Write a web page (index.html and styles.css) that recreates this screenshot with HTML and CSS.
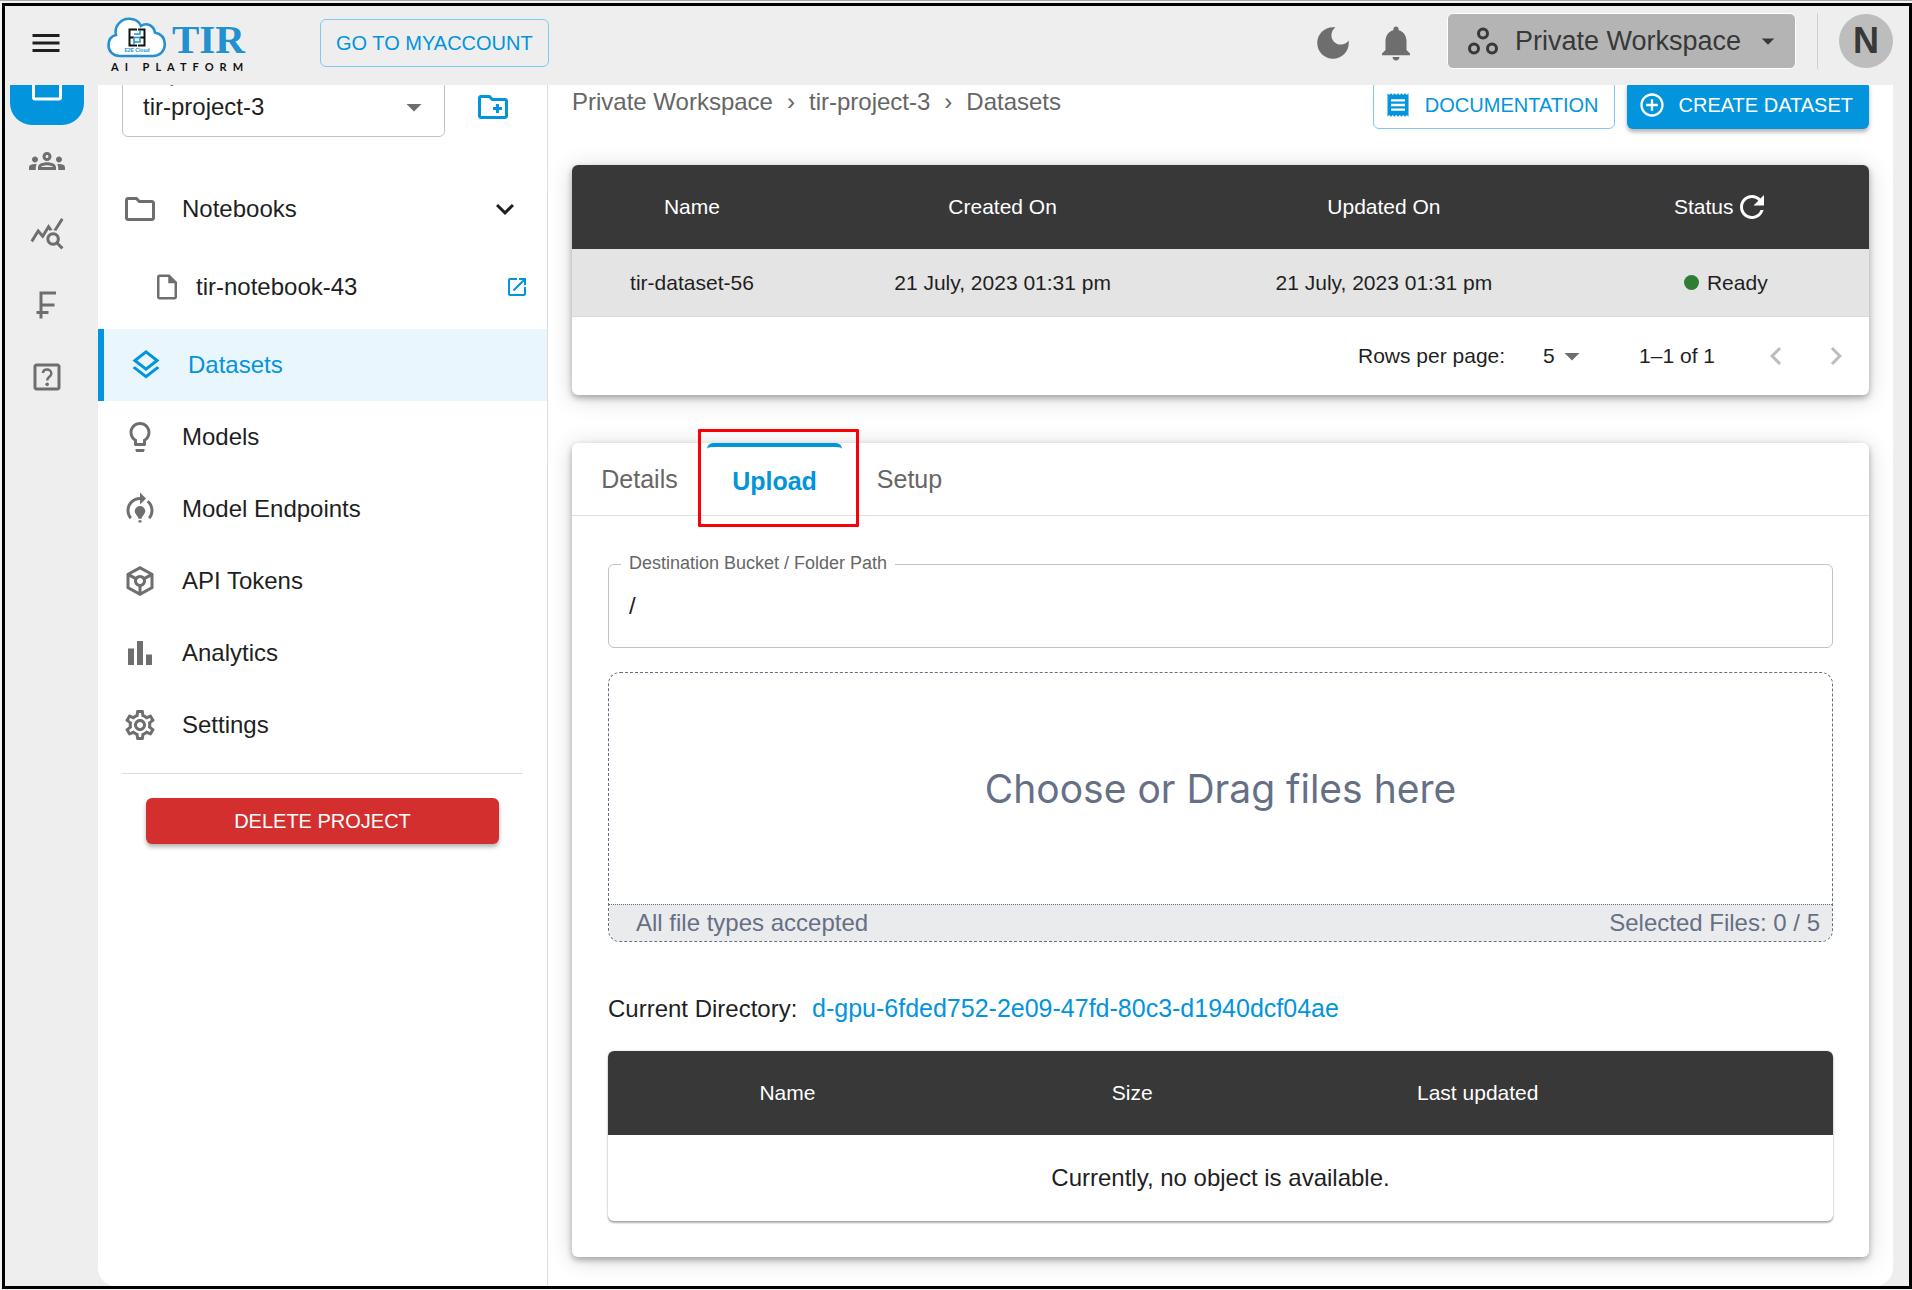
FILE: index.html
```html
<!DOCTYPE html>
<html lang="en">
<head>
  <meta charset="utf-8">
  <meta name="viewport" content="width=device-width, initial-scale=1">
  <title>Datasets - TIR AI Platform</title>
  <link rel="stylesheet" href="styles.css">
</head>
<body>
  <svg class="sprite" aria-hidden="true">
    <symbol id="i-caret" viewBox="0 0 24 24"><path d="M7 10l5 5 5-5z"/></symbol>
    <symbol id="i-refresh" viewBox="0 0 24 24"><path d="M17.65 6.35C16.2 4.9 14.21 4 12 4c-4.42 0-7.99 3.58-7.99 8s3.57 8 7.99 8c3.73 0 6.84-2.55 7.73-6h-2.08c-.82 2.33-3.04 4-5.65 4-3.31 0-6-2.69-6-6s2.69-6 6-6c1.66 0 3.14.69 4.22 1.78L13 11h7V4l-2.35 2.35z"/></symbol>
  </svg>

  <div class="frame">
    <header class="topbar">
      <button class="icon-btn" type="button" aria-label="Menu">
        <svg class="icon" viewBox="0 0 24 24"><path d="M3 18h18v-2H3v2zm0-5h18v-2H3v2zm0-7v2h18V6H3z"/></svg>
      </button>
      <a class="logo" href="#" aria-label="TIR AI Platform">
        <svg class="logo-mark" viewBox="0 -2 142 60">
          <path d="M13 41C6 41 1.500 36 1.500 30.500c0-6 3-9.500 7.500-10.500C7 11 14 3.800 22 3.800c6 0 10 2.700 12 7.200 5-3.500 12.500-1.500 14 6.500 6.500 1.500 9.800 6 9.800 11.500 0 7-5 12-12 12z" fill="#fff" stroke="#2391d0" stroke-width="2.600"/>
          <g fill="none" stroke-width="2">
            <path d="M30 14.500H22.500v16H30M22.500 22.500H27" stroke="#111"/>
            <path d="M31 14.500h6.500v16H31M33 22.500h4.500" stroke="#111"/>
            <path d="M27 19h6v-4M27 30v-7.500h6V27h-6" stroke="#2391d0" stroke-width="1.500"/>
          </g>
          <text class="logo-cloud" x="30" y="37" text-anchor="middle">E2E Cloud</text>
          <text class="logo-name" x="65" y="38">TIR</text>
          <text class="logo-tag" x="4" y="56">AI PLATFORM</text>
        </svg>
      </a>
      <a class="btn btn-outline account" href="#">GO TO MYACCOUNT</a>
      <div class="topbar-tools">
        <button class="icon-btn muted" type="button" aria-label="Dark mode">
          <svg class="icon-lg" viewBox="0 0 24 24"><path d="M12 3c-4.970 0-9 4.030-9 9s4.030 9 9 9 9-4.030 9-9c0-.46-.04-.92-.1-1.360-.98 1.370-2.580 2.260-4.400 2.260-2.980 0-5.400-2.420-5.400-5.400 0-1.810.89-3.420 2.260-4.400-.44-.06-.9-.1-1.360-.1z"/></svg>
        </button>
        <button class="icon-btn muted" type="button" aria-label="Notifications">
          <svg class="icon-lg" viewBox="0 0 24 24"><path d="M12 22c1.100 0 2-.9 2-2h-4c0 1.100.89 2 2 2zm6-6v-5c0-3.070-1.640-5.640-4.500-6.320V4c0-.83-.67-1.500-1.500-1.500s-1.500.67-1.500 1.500v.68C7.630 5.360 6 7.920 6 11v5l-2 2v1h16v-1l-2-2z"/></svg>
        </button>
        <div class="account-tools">
          <button class="workspace" type="button">
            <svg class="icon outline" viewBox="0 0 24 24"><circle cx="12" cy="7" r="3"/><circle cx="6" cy="17" r="3"/><circle cx="18" cy="17" r="3"/></svg>
            <span>Private Workspace</span>
            <svg class="icon-md" viewBox="0 0 24 24"><use href="#i-caret"/></svg>
          </button>
          <span class="divider-v"></span>
          <button class="avatar" type="button" aria-label="Account">N</button>
        </div>
      </div>
    </header>

    <div class="body">
      <nav class="rail" aria-label="Main">
        <a class="rail-item active" href="#" aria-label="Projects"><svg class="icon outline" viewBox="0 0 24 24"><rect x="3" y="3" width="18" height="19" rx="1"/></svg></a>
        <a class="rail-item" href="#" aria-label="Teams"><svg class="icon" viewBox="0 0 24 24"><path d="M4 13c1.100 0 2-.9 2-2s-.9-2-2-2-2 .9-2 2 .9 2 2 2zm1.130 1.100c-.37-.06-.74-.1-1.130-.1-.99 0-1.930.21-2.780.58C.48 14.900 0 15.620 0 16.430V18h4.500v-1.610c0-.83.23-1.610.63-2.290zM20 13c1.100 0 2-.9 2-2s-.9-2-2-2-2 .9-2 2 .9 2 2 2zm4 3.430c0-.81-.48-1.530-1.220-1.850-.85-.37-1.790-.58-2.780-.58-.39 0-.76.04-1.130.1.4.68.63 1.460.63 2.290V18H24v-1.570zm-7.760-2.780c-1.170-.52-2.610-.9-4.240-.9s-3.070.39-4.240.9C6.680 14.130 6 15.210 6 16.390V18h12v-1.610c0-1.180-.68-2.260-1.760-2.740zM8.070 16c.09-.23.13-.39.91-.69.97-.38 1.990-.56 3.020-.56s2.050.18 3.020.56c.77.3.81.46.91.69H8.070zM12 8c.55 0 1 .45 1 1s-.45 1-1 1-1-.45-1-1 .45-1 1-1m0-2c-1.660 0-3 1.340-3 3s1.340 3 3 3 3-1.340 3-3-1.340-3-3-3z"/></svg></a>
        <a class="rail-item" href="#" aria-label="Usage"><svg class="icon" viewBox="0 0 24 24"><path d="M19.880 18.470c.44-.7.7-1.510.7-2.390 0-2.490-2.010-4.500-4.500-4.500s-4.500 2.010-4.500 4.500 2.010 4.500 4.490 4.500c.88 0 1.700-.26 2.390-.7L21.580 23 23 21.580l-3.120-3.110zm-3.800.11c-1.380 0-2.500-1.120-2.500-2.500s1.120-2.500 2.500-2.500 2.500 1.120 2.500 2.500-1.120 2.500-2.500 2.500zm-.36-8.500c-.74.02-1.450.18-2.100.45l-.55-.83-3.800 6.180-3.010-3.520-3.630 5.810L1 17l5-8 3 3.500L13 6l2.720 4.080zm2.590.5c-.64-.28-1.330-.45-2.050-.49L21.380 2 23 3.180l-4.690 7.400z"/></svg></a>
        <a class="rail-item" href="#" aria-label="Billing"><svg class="icon" viewBox="0 0 24 24"><path d="M18 5V3H7v13H5v2h2v3h2v-3h4v-2H9v-3h8v-2H9V5z"/></svg></a>
        <a class="rail-item" href="#" aria-label="Help"><svg class="icon" viewBox="0 0 24 24"><path d="M19 3H5c-1.100 0-2 .9-2 2v14c0 1.100.9 2 2 2h14c1.100 0 2-.9 2-2V5c0-1.100-.9-2-2-2zm0 16H5V5h14v14z"/><path d="M9.200 9.300C9.500 7.800 10.600 7 12 7c1.700 0 2.900 1.100 2.900 2.600 0 2.200-2.800 2.300-2.800 4.700" fill="none" stroke="currentColor" stroke-width="1.600"/><circle cx="12.100" cy="16.900" r="1.200"/></svg></a>
      </nav>

      <main class="main">
        <aside class="sidebar">
          <div class="project">
            <div class="field project-field">
              <label class="field-label" for="project">Project</label>
              <select id="project" class="project-select"><option>tir-project-3</option></select>
              <svg class="icon project-caret" viewBox="0 0 24 24" aria-hidden="true"><use href="#i-caret"/></svg>
            </div>
            <button class="icon-btn primary" type="button" aria-label="New project">
              <svg class="icon" viewBox="0 0 24 24"><path d="M20 6h-8l-2-2H4c-1.110 0-1.990.89-1.990 2L2 18c0 1.110.89 2 2 2h16c1.110 0 2-.89 2-2V8c0-1.110-.89-2-2-2zm0 12H4V6h5.170l2 2H20v10zm-8-4h2v2h2v-2h2v-2h-2v-2h-2v2h-2z"/></svg>
            </button>
          </div>

          <nav class="menu" aria-label="Project">
            <a class="menu-item" href="#">
              <svg class="icon" viewBox="0 0 24 24"><path d="M9.170 6l2 2H20v10H4V6h5.170M10 4H4c-1.100 0-1.990.9-1.990 2L2 18c0 1.100.9 2 2 2h16c1.100 0 2-.9 2-2V8c0-1.100-.9-2-2-2h-8l-2-2z"/></svg>
              <span class="menu-text">Notebooks</span>
              <svg class="icon dark" viewBox="0 0 24 24"><path d="M16.590 8.590L12 13.170 7.410 8.590 6 10l6 6 6-6z"/></svg>
            </a>
            <a class="menu-item sub" href="#">
              <svg class="icon-md" viewBox="0 0 24 24"><path d="M14 2H6c-1.100 0-1.990.9-1.990 2L4 20c0 1.100.89 2 1.990 2H18c1.100 0 2-.9 2-2V8l-6-6zM6 20V4h7v5h5v11H6z"/></svg>
              <span class="menu-text">tir-notebook-43</span>
              <svg class="icon-sm primary" viewBox="0 0 24 24"><path d="M19 19H5V5h7V3H5c-1.110 0-2 .9-2 2v14c0 1.100.89 2 2 2h14c1.100 0 2-.9 2-2v-7h-2v7zM14 3v2h3.590l-9.830 9.830 1.410 1.410L19 6.410V10h2V3h-7z"/></svg>
            </a>
            <a class="menu-item selected" href="#" aria-current="page">
              <svg class="icon" viewBox="0 0 24 24"><path d="M11.990 18.540l-7.370-5.730L3 14.070l9 7 9-7-1.630-1.270zM12 16l7.360-5.730L21 9l-9-7-9 7 1.630 1.270L12 16zm0-11.470L17.740 9 12 13.470 6.260 9 12 4.530z"/></svg>
              <span class="menu-text">Datasets</span>
            </a>
            <a class="menu-item" href="#">
              <svg class="icon" viewBox="0 0 24 24"><path d="M9 21c0 .55.45 1 1 1h4c.55 0 1-.45 1-1v-1H9v1zm3-19C8.140 2 5 5.140 5 9c0 2.380 1.190 4.470 3 5.740V17c0 .55.45 1 1 1h6c.55 0 1-.45 1-1v-2.260c1.810-1.270 3-3.360 3-5.740 0-3.860-3.140-7-7-7zm2.850 11.100l-.85.6V16h-4v-2.300l-.85-.6C7.800 12.160 7 10.630 7 9c0-2.760 2.240-5 5-5s5 2.240 5 5c0 1.630-.8 3.160-2.150 4.100z"/></svg>
              <span class="menu-text">Models</span>
            </a>
            <a class="menu-item" href="#">
              <svg class="icon" viewBox="0 0 24 24"><path d="M15.500 13.500c0 2-2.500 3.500-2.500 5h-2c0-1.500-2.500-3-2.500-5 0-1.930 1.570-3.500 3.500-3.500s3.500 1.570 3.500 3.500zM13 19.500h-2V21h2v-1.500zM19 13c0 1.680-.59 3.210-1.580 4.420l1.420 1.420C20.180 17.270 21 15.230 21 13c0-2.740-1.230-5.190-3.160-6.840l-1.420 1.420C17.990 8.860 19 10.820 19 13zM16 5l-4-4v3c-4.970 0-9 4.030-9 9 0 2.230.82 4.270 2.160 5.840l1.420-1.420C5.590 16.210 5 14.680 5 13c0-3.860 3.140-7 7-7v3l4-4z"/></svg>
              <span class="menu-text">Model Endpoints</span>
            </a>
            <a class="menu-item" href="#">
              <svg class="icon" viewBox="0 0 24 24"><path d="M21 7 12 2 3 7v10l9 5 9-5V7zm-9-2.710 5.910 3.280-3.010 1.670C14.170 8.480 13.140 8 12 8s-2.170.48-2.900 1.240L6.090 7.570 12 4.290zm-1 14.870-6-3.330V9.260l3.130 1.740c-.08.32-.13.65-.13 1 0 1.860 1.270 3.430 3 3.870v3.290zM10 12c0-1.100.9-2 2-2s2 .9 2 2-.9 2-2 2-2-.9-2-2zm3 7.160v-3.280c1.730-.44 3-2.010 3-3.870 0-.35-.05-.68-.14-1.010L19 9.260v6.570l-6 3.330z"/></svg>
              <span class="menu-text">API Tokens</span>
            </a>
            <a class="menu-item" href="#">
              <svg class="icon" viewBox="0 0 24 24"><path d="M4 9h4v11H4zM16 13h4v7h-4zM10 4h4v16h-4z"/></svg>
              <span class="menu-text">Analytics</span>
            </a>
            <a class="menu-item" href="#">
              <svg class="icon" viewBox="0 0 24 24"><path d="M19.430 12.980c.04-.32.07-.64.07-.98 0-.34-.03-.66-.07-.98l2.110-1.650c.19-.15.24-.42.12-.64l-2-3.460c-.09-.16-.26-.25-.44-.25-.06 0-.12.01-.17.03l-2.490 1c-.52-.4-1.080-.73-1.690-.98l-.38-2.650C14.460 2.180 14.250 2 14 2h-4c-.25 0-.46.18-.49.42l-.38 2.650c-.61.25-1.170.59-1.690.98l-2.490-1c-.06-.02-.12-.03-.18-.03-.17 0-.34.09-.43.25l-2 3.460c-.13.22-.07.49.12.64l2.110 1.650c-.04.32-.07.65-.07.98 0 .33.03.66.07.98l-2.110 1.650c-.19.15-.24.42-.12.64l2 3.460c.09.16.26.25.44.25.06 0 .12-.01.17-.03l2.490-1c.52.4 1.080.73 1.690.98l.38 2.650c.03.24.24.42.49.42h4c.25 0 .46-.18.49-.42l.38-2.650c.61-.25 1.170-.59 1.690-.98l2.490 1c.06.02.12.03.18.03.17 0 .34-.09.43-.25l2-3.460c.12-.22.07-.49-.12-.64l-2.110-1.650zm-1.980-1.710c.04.31.05.52.05.73 0 .21-.02.43-.05.73l-.14 1.130.89.7 1.080.84-.7 1.210-1.270-.51-1.040-.42-.9.68c-.43.32-.84.56-1.250.73l-1.060.43-.16 1.130-.2 1.350h-1.400l-.19-1.350-.16-1.130-1.060-.43c-.43-.18-.83-.41-1.230-.71l-.91-.7-1.060.43-1.270.51-.7-1.210 1.080-.84.89-.7-.14-1.130c-.03-.31-.05-.54-.05-.74s.02-.43.05-.73l.14-1.130-.89-.7-1.080-.84.7-1.210 1.270.51 1.040.42.9-.68c.43-.32.84-.56 1.250-.73l1.060-.43.16-1.130.2-1.350h1.390l.19 1.350.16 1.130 1.060.43c.43.18.83.41 1.230.71l.91.7 1.060-.43 1.270-.51.7 1.210-1.070.85-.89.7.14 1.130zM12 8c-2.210 0-4 1.790-4 4s1.790 4 4 4 4-1.790 4-4-1.790-4-4-4zm0 6c-1.100 0-2-.9-2-2s.9-2 2-2 2 .9 2 2-.9 2-2 2z"/></svg>
              <span class="menu-text">Settings</span>
            </a>
          </nav>
          <div class="sidebar-foot">
            <button class="btn btn-danger" type="button">DELETE PROJECT</button>
          </div>
        </aside>

        <section class="content">
          <div class="page-head">
            <nav class="crumbs" aria-label="Breadcrumb">
              <a href="#">Private Workspace</a><span>›</span><a href="#">tir-project-3</a><span>›</span><a href="#">Datasets</a>
            </nav>
            <div class="actions">
              <a class="btn btn-outline" href="#">
                <svg class="icon-btn-glyph" viewBox="0 0 24 24"><path d="M18 17H6v-2h12v2zm0-4H6v-2h12v2zm0-4H6V7h12v2zM3 22l1.500-1.500L6 22l1.500-1.500L9 22l1.500-1.500L12 22l1.500-1.500L15 22l1.500-1.500L18 22l1.500-1.500L21 22V2l-1.500 1.500L18 2l-1.500 1.500L15 2l-1.500 1.500L12 2l-1.500 1.500L9 2 7.500 3.500 6 2 4.500 3.500 3 2v20z"/></svg>
                DOCUMENTATION
              </a>
              <button class="btn btn-primary" type="button">
                <svg class="icon-btn-glyph" viewBox="0 0 24 24"><path d="M13 7h-2v4H7v2h4v4h2v-4h4v-2h-4V7zm-1-5C6.480 2 2 6.480 2 12s4.480 10 10 10 10-4.480 10-10S17.520 2 12 2zm0 18c-4.410 0-8-3.590-8-8s3.590-8 8-8 8 3.590 8 8-3.590 8-8 8z"/></svg>
                CREATE DATASET
              </button>
            </div>
          </div>

          <div class="card">
            <table class="grid datasets">
              <colgroup><col class="d-name"><col class="d-date"><col class="d-date"><col></colgroup>
              <thead>
                <tr>
                  <th scope="col">Name</th>
                  <th scope="col">Created On</th>
                  <th scope="col">Updated On</th>
                  <th scope="col"><span class="status-head">Status<button class="icon-btn" type="button" aria-label="Refresh"><svg class="icon" viewBox="0 0 24 24"><use href="#i-refresh"/></svg></button></span></th>
                </tr>
              </thead>
              <tbody>
                <tr>
                  <td>tir-dataset-56</td>
                  <td>21 July, 2023 01:31 pm</td>
                  <td>21 July, 2023 01:31 pm</td>
                  <td><span class="status"><span class="dot"></span>Ready</span></td>
                </tr>
              </tbody>
            </table>
            <div class="pager">
              <label for="rows">Rows per page:</label>
              <span class="rows-box">
                <select id="rows" class="rows-select"><option>5</option></select>
                <svg class="icon rows-caret" viewBox="0 0 24 24" aria-hidden="true"><use href="#i-caret"/></svg>
              </span>
              <span class="range">1–1 of 1</span>
              <span class="pager-nav">
                <button class="icon-btn off" type="button" aria-label="Previous page"><svg class="icon" viewBox="0 0 24 24"><path d="M15.410 7.410L14 6l-6 6 6 6 1.410-1.410L10.830 12z"/></svg></button>
                <button class="icon-btn off" type="button" aria-label="Next page"><svg class="icon" viewBox="0 0 24 24"><path d="M10 6L8.590 7.410 13.170 12l-4.580 4.590L10 18l6-6z"/></svg></button>
              </span>
            </div>
          </div>

          <div class="card panel">
            <div class="tabs" role="tablist">
              <button class="tab" type="button" role="tab">Details</button>
              <button class="tab current" type="button" role="tab" aria-selected="true">Upload</button>
              <button class="tab" type="button" role="tab">Setup</button>
            </div>
            <div class="panel-body">
              <div class="field">
                <label class="field-label" for="path">Destination Bucket / Folder Path</label>
                <input id="path" class="path-input" type="text" value="/">
              </div>
              <label class="dropzone">
                <input class="file-input" type="file" multiple>
                <span class="drop-title">Choose or Drag files here</span>
                <span class="drop-foot"><span>All file types accepted</span><span>Selected Files: 0 / 5</span></span>
              </label>
              <p class="directory">Current Directory: <a href="#">d-gpu-6fded752-2e09-47fd-80c3-d1940dcf04ae</a></p>
              <table class="grid objects">
                <colgroup><col class="o-name"><col class="o-size"><col class="o-date"><col></colgroup>
                <thead>
                  <tr><th scope="col">Name</th><th scope="col">Size</th><th scope="col">Last updated</th><th></th></tr>
                </thead>
                <tbody>
                  <tr><td colspan="4">Currently, no object is available.</td></tr>
                </tbody>
              </table>
            </div>
          </div>
        </section>
      </main>
    </div>
  </div>
</body>
</html>
```

FILE: styles.css
```css
* { box-sizing: border-box; }

:root {
  --blue: #0294dc;
  --ink: #1f1f1f;
  --grey: #6e6e6e;
  --slate: #667085;
  --surface: #eeeeee;
  --head: #383838;
  --line: #dedede;
}

body {
  margin: 0;
  min-height: 100vh;
  display: flex;
  padding: 2px 0 2px 2px;
  border-top: 1px solid #a9a9ab;
  background: #f4f4f4;
  color: var(--ink);
  font: 24px/36px "Liberation Sans", Arial, sans-serif;
}

a { color: inherit; text-decoration: none; }
button, input, select { font: inherit; color: inherit; }
svg { display: block; flex: none; fill: currentColor; }

.sprite { position: absolute; width: 0; height: 0; }
.icon { width: 36px; height: 36px; }
.icon-lg { width: 42px; height: 42px; }
.icon-md { width: 30px; height: 30px; }
.icon-sm { width: 24px; height: 24px; }
.icon-btn-glyph { width: 28px; height: 28px; }
.outline { fill: none; stroke: currentColor; stroke-width: 2; }

.icon-btn {
  display: flex;
  padding: 0;
  border: 0;
  background: none;
  cursor: pointer;
}
.icon-btn.muted { color: var(--grey); }
.icon-btn.primary { color: var(--blue); }
.icon-btn.off { color: #bdbdbd; }

.frame {
  flex: 1;
  min-width: 0;
  display: flex;
  flex-direction: column;
  border: 3px solid #000;
  background: var(--surface);
}

/* Top bar */
.topbar {
  position: relative;
  z-index: 2;
  display: flex;
  align-items: center;
  height: 79px;
  padding: 0 16px 6px 23px;
  background: var(--surface);
}
.logo { margin: 0 71px 0 43px; }
.logo-mark { width: 142px; height: 60px; }
.logo-cloud { font: bold 5px "Liberation Sans", sans-serif; fill: #2391d0; }
.logo-name { font: bold 41px "Liberation Serif", serif; fill: #2391d0; }
.logo-tag { font: bold 11px Lato, sans-serif; letter-spacing: 6px; fill: #111; }
.topbar-tools {
  display: flex;
  align-items: center;
  gap: 21px;
  margin-left: auto;
}
.account-tools {
  display: flex;
  align-items: center;
  gap: 21px;
  padding: 0 0 4px 9px;
}
.workspace {
  display: flex;
  align-items: center;
  width: 349px;
  height: 56px;
  padding: 0 12px 0 17px;
  border: 1px solid #fff;
  border-radius: 6px;
  background: #b4b4b4;
  color: #383838;
  font-size: 27px;
}
.workspace span { margin: 0 auto 0 14px; }
.divider-v { width: 1px; height: 56px; background: #d0d0d0; }
.avatar {
  width: 54px;
  height: 54px;
  padding: 0;
  border: 0;
  border-radius: 50%;
  background: #bdbdbd;
  color: #383838;
  font-size: 36px;
  font-weight: bold;
}

/* Buttons */
.btn {
  display: flex;
  align-items: center;
  justify-content: center;
  height: 48px;
  border: 1px solid transparent;
  border-radius: 6px;
  font-size: 20px;
  gap: 13px;
  padding: 0 15px 0 10px;
  white-space: nowrap;
}
.btn-outline { border-color: #80c9ed; color: var(--blue); }
.account { padding: 0 15px; }
.btn-primary {
  background: var(--blue);
  color: #fff;
  box-shadow: 0 3px 4px rgba(0, 0, 0, .3);
}
.btn-danger {
  width: 100%;
  height: 46px;
  padding: 0 10px;
  background: #d32f2f;
  color: #fff;
  box-shadow: 0 3px 4px rgba(0, 0, 0, .3);
}

/* The scrolled page runs under the top bar */
.body {
  flex: 1;
  display: flex;
  margin-top: -34px;
}
.rail {
  width: 93px;
  padding-left: 5px;
  flex: none;
}
.rail-item {
  display: flex;
  align-items: center;
  justify-content: center;
  width: 74px;
  height: 72px;
  color: var(--grey);
}
.rail-item.active {
  height: 74px;
  padding-bottom: 8px;
  border-radius: 22px;
  background: var(--blue);
  color: #fff;
}
.main {
  flex: 1;
  min-width: 0;
  display: flex;
  margin-right: 16px;
  border-radius: 0 0 18px 18px;
  background: #fff;
}

/* Sidebar */
.sidebar {
  flex: none;
  width: 450px;
  padding-top: 26px;
  border-right: 1px solid var(--line);
}
.project {
  display: flex;
  align-items: center;
  gap: 30px;
  padding-left: 24px;
}
.field {
  position: relative;
  border: 1px solid #c2c2c2;
  border-radius: 6px;
}
.field-label {
  position: absolute;
  top: -14px;
  left: 12px;
  padding: 0 8px;
  background: #fff;
  color: #666;
  font-size: 18px;
  line-height: 24px;
}
.project-field { width: 323px; }
.project-select {
  display: block;
  width: 100%;
  height: 58px;
  padding: 0 48px 0 20px;
  border: 0;
  border-radius: 6px;
  background: none;
  appearance: none;
}
.project-caret {
  position: absolute;
  top: 11px;
  right: 12px;
  color: var(--grey);
  pointer-events: none;
}
.menu { margin-top: 36px; }
.menu-item {
  display: flex;
  align-items: center;
  gap: 24px;
  height: 72px;
  padding: 0 24px;
}
.menu-item svg { color: var(--grey); }
.menu-item .dark { color: var(--ink); }
.menu-item .primary { color: var(--blue); }
.menu-text { flex: 1; }
.menu-item.sub {
  height: 84px;
  gap: 14px;
  padding: 0 18px 0 54px;
}
.menu-item.selected {
  border-left: 6px solid var(--blue);
  background: #eaf6fd;
}
.menu-item.selected, .menu-item.selected svg { color: var(--blue); }
.sidebar-foot {
  margin: 12px 24px 0;
  padding: 24px;
  border-top: 1px solid var(--line);
}

/* Page content */
.content {
  flex: 1;
  min-width: 0;
  padding: 30px 24px 29px;
}
.page-head {
  display: flex;
  justify-content: space-between;
  height: 48px;
  margin-bottom: 36px;
}
.crumbs {
  display: flex;
  gap: 14px;
  line-height: 42px;
  color: #666;
}
.actions { display: flex; gap: 12px; }

.card {
  border-radius: 6px;
  background: #fff;
  box-shadow: 0 3px 6px rgba(0, 0, 0, .3), 0 3px 24px rgba(0, 0, 0, .16);
}
.grid {
  width: 100%;
  border-collapse: separate;
  border-spacing: 0;
  table-layout: fixed;
  text-align: center;
}
.grid th {
  height: 84px;
  padding: 0;
  background: var(--head);
  color: #fff;
  font-size: 21px;
  font-weight: normal;
}
.grid th:first-child { border-top-left-radius: 6px; }
.grid th:last-child { border-top-right-radius: 6px; }
.grid td { padding: 0; }
.datasets td {
  height: 68px;
  border-bottom: 1px solid #dadada;
  background: #e4e4e4;
  font-size: 21px;
}
.d-name { width: 18.5%; }
.d-date { width: 29.4%; }
.status-head, .status {
  display: flex;
  align-items: center;
  justify-content: center;
}
.status { gap: 8px; padding-left: 8px; }
.dot { width: 15px; height: 15px; border-radius: 50%; background: #2e7d32; }

.pager {
  display: flex;
  align-items: center;
  justify-content: flex-end;
  height: 78px;
  padding-right: 15px;
  font-size: 21px;
}
.rows-box { position: relative; margin: 0 48px 0 38px; }
.rows-select {
  display: block;
  width: 48px;
  height: 36px;
  padding: 0;
  border: 0;
  background: none;
  appearance: none;
}
.rows-caret {
  position: absolute;
  top: 0;
  right: 1px;
  color: var(--grey);
  pointer-events: none;
}
.pager-nav { display: flex; gap: 24px; margin-left: 43px; }

/* Dataset panel */
.panel { margin-top: 48px; }
.tabs { display: flex; border-bottom: 1px solid var(--line); }
.tab {
  width: 135px;
  height: 72px;
  padding: 0;
  border: 0;
  background: none;
  color: #666;
  font-size: 25px;
}
.tab.current {
  position: relative;
  border-top: 4px solid var(--blue);
  border-radius: 6px 6px 0 0;
  color: var(--blue);
  font-weight: bold;
}
/* Highlight box around the open tab */
.tab.current::after {
  content: "";
  position: absolute;
  inset: -18px -17px -12px -9px;
  border: 3px solid #fb0007;
  border-radius: 1px;
}
.panel-body { padding: 48px 36px 36px; }
.path-input {
  display: block;
  width: 100%;
  height: 82px;
  padding: 0 20px;
  border: 0;
  border-radius: 6px;
  background: none;
}
.dropzone {
  display: flex;
  flex-direction: column;
  height: 270px;
  margin: 24px 0 48px;
  border: 1px dashed var(--slate);
  border-radius: 12px;
  color: var(--slate);
  overflow: hidden;
  cursor: pointer;
}
.file-input { position: absolute; width: 1px; height: 1px; opacity: 0; }
.drop-title {
  flex: 1;
  display: flex;
  align-items: center;
  justify-content: center;
  font-family: Inter, sans-serif;
  font-size: 39px;
}
.drop-foot {
  display: flex;
  justify-content: space-between;
  padding: 0 12px 0 27px;
  border-top: 1px dotted var(--slate);
  background: #eaebed;
}
.directory { margin: 0 0 24px; }
.directory a { margin-left: 8px; color: var(--blue); font-size: 25px; }
.objects {
  border-radius: 6px;
  box-shadow: 0 2px 2px rgba(0, 0, 0, .3), 0 0 2px rgba(0, 0, 0, .2);
}
.objects td { height: 86px; }
.o-name { width: 29.3%; }
.o-size { width: 27%; }
.o-date { width: 29.4%; }
```
